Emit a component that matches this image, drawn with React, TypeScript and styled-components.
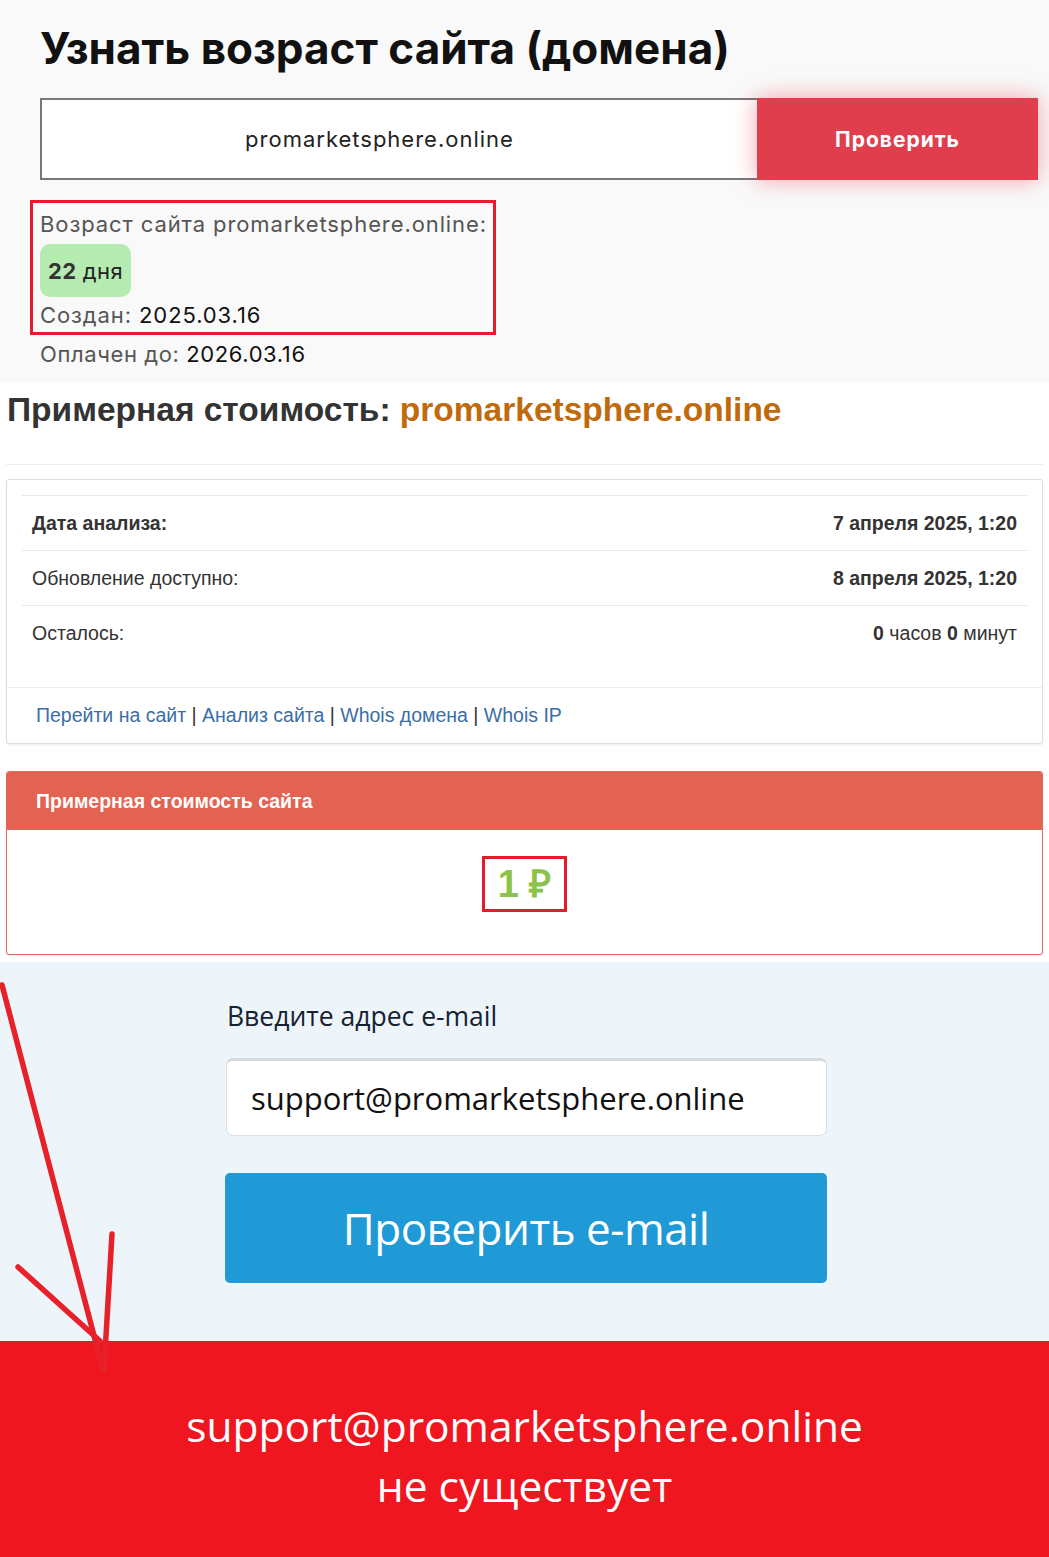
import React from "react";
import styled, { createGlobalStyle } from "styled-components";

const GlobalStyle = createGlobalStyle`
  html, body {
    margin: 0;
    padding: 0;
    background: #ffffff;
  }
  * {
    box-sizing: border-box;
  }
`;

const Page = styled.div`
  position: relative;
  width: 1049px;
  overflow: hidden;
`;

// ---- domain age block ----

const AgeSection = styled.section`
  background: #f9f9f9;
  padding: 22px 11px 12px 40px;
  font-family: "Inter", "Open Sans", sans-serif;
`;

const AgeTitle = styled.h1`
  margin: 0 0 24px;
  font-size: 44px;
  line-height: 52px;
  font-weight: 700;
  color: #111;
`;

const CheckRow = styled.div`
  display: flex;
  height: 82px;
`;

const DomainInput = styled.div`
  flex: 1;
  border: 2px solid #777;
  border-right: none;
  background: #fff;
  display: flex;
  align-items: center;
  justify-content: center;
  padding-right: 40px;
  font-size: 22px;
  letter-spacing: 1px;
  color: #222;
`;

const CheckButton = styled.button`
  width: 281px;
  border: none;
  background: #e03e4d;
  color: #fff;
  font-family: inherit;
  font-size: 21px;
  letter-spacing: 1px;
  font-weight: 700;
  box-shadow: 0 0 22px rgba(230, 60, 75, 0.45);
`;

const ResultBox = styled.div`
  margin: 20px 0 0 -10px;
  width: 466px;
  border: 3px solid #e21c2b;
  padding: 5px 0 1px 7px;
`;

const AgeLine = styled.div`
  font-size: 22px;
  letter-spacing: 0.9px;
  line-height: 32px;
  color: #555;
`;

const Strong = styled.span`
  color: #111;
`;

const DaysBadge = styled.div`
  display: inline-flex;
  align-items: center;
  height: 53px;
  padding: 0 8px;
  margin: 4px 0 2px;
  border-radius: 10px;
  background: #b5ebb1;
  font-size: 22px;
  letter-spacing: 0.5px;
  color: #222;

  b {
    color: #333;
    margin-right: 6px;
  }
`;

const PaidLine = styled(AgeLine)`
  margin-top: 3px;
  letter-spacing: 0.6px;
`;

// ---- estimate block ----

const EstimateSection = styled.section`
  background: #fff;
  padding: 6px 6px 7px;
  font-family: "Liberation Sans", Arial, sans-serif;
`;

const EstimateTitle = styled.h2`
  margin: 0 0 0 1px;
  font-size: 33.5px;
  line-height: 44px;
  font-weight: 700;
  color: #333;

  span {
    color: #c06a0c;
  }
`;

const Divider = styled.hr`
  border: none;
  border-top: 1px solid #eee;
  margin: 32px 0 14px;
`;

const Panel = styled.div<{ accent?: string }>`
  border: 1px solid ${(p) => p.accent || "#ddd"};
  border-radius: 3px;
  background: #fff;
  box-shadow: 0 1px 2px rgba(0, 0, 0, 0.08);
  overflow: hidden;
`;

const PanelGap = styled.div`
  height: 27px;
`;

const PanelBody = styled.div`
  padding: 15px 15px 27px;
`;

const InfoRow = styled.div`
  display: flex;
  justify-content: space-between;
  align-items: center;
  height: 55px;
  padding: 0 10px;
  border-top: 1px solid #e8e8e8;
  font-size: 19.5px;
  color: #333;
`;

const RowLabel = styled.span<{ bold?: boolean }>`
  font-weight: ${(p) => (p.bold ? 700 : 400)};
`;

const PanelFooter = styled.div`
  border-top: 1px solid #eee;
  padding: 16px 29px 16px;
  font-size: 19.5px;
  line-height: 23px;
  color: #333;

  a {
    color: #3b6ea5;
    text-decoration: none;
  }
`;

const PriceHeader = styled.div`
  background: #e36352;
  color: #fff;
  font-weight: 700;
  font-size: 19.5px;
  height: 58px;
  display: flex;
  align-items: center;
  padding-left: 29px;
`;

const PriceBody = styled.div`
  display: flex;
  justify-content: center;
  padding: 26px 0 42px;
`;

const PriceValue = styled.div`
  border: 3px solid #e21c2b;
  padding: 3px 13px;
  font-size: 38px;
  line-height: 44px;
  font-weight: 700;
  color: #8bc34a;
`;

// ---- email check block ----

const EmailSection = styled.section`
  background: #eef5fa;
  padding: 38px 0 58px 225px;
  font-family: "Open Sans", "DejaVu Sans", sans-serif;
`;

const EmailLabel = styled.div`
  font-size: 26.5px;
  line-height: 32px;
  color: #142232;
  margin-left: 2px;
  margin-bottom: 26px;
`;

const EmailInput = styled.div`
  width: 601px;
  height: 78px;
  margin-left: 1px;
  background: #fff;
  border: 1px solid #dcdfe2;
  border-top: 3px solid #d6dadd;
  border-radius: 7px;
  display: flex;
  align-items: center;
  padding-left: 24px;
  font-size: 31px;
  color: #111;
`;

const EmailButton = styled.button`
  display: block;
  width: 602px;
  height: 110px;
  margin-top: 37px;
  border: none;
  border-radius: 5px;
  background: #1f9ad6;
  color: #fff;
  font-family: inherit;
  font-size: 44px;
  letter-spacing: -0.5px;
`;

const ErrorBanner = styled.section`
  background: #ef1620;
  color: #fff;
  font-family: "Open Sans", "DejaVu Sans", sans-serif;
  font-size: 42.5px;
  line-height: 60px;
  text-align: center;
  padding: 55px 0 44px;
`;

const ArrowOverlay = styled.svg`
  position: absolute;
  left: 0;
  top: 975px;
  pointer-events: none;
`;

export default function App() {
  return (
    <Page>
      <GlobalStyle />
      <AgeSection>
        <AgeTitle>Узнать возраст сайта (домена)</AgeTitle>
        <CheckRow>
          <DomainInput>promarketsphere.online</DomainInput>
          <CheckButton>Проверить</CheckButton>
        </CheckRow>
        <ResultBox>
          <AgeLine>Возраст сайта promarketsphere.online:</AgeLine>
          <DaysBadge>
            <b>22</b> дня
          </DaysBadge>
          <AgeLine>
            Создан: <Strong>2025.03.16</Strong>
          </AgeLine>
        </ResultBox>
        <PaidLine>
          Оплачен до: <Strong>2026.03.16</Strong>
        </PaidLine>
      </AgeSection>

      <EstimateSection>
        <EstimateTitle>
          Примерная стоимость: <span>promarketsphere.online</span>
        </EstimateTitle>
        <Divider />
        <Panel>
          <PanelBody>
            <InfoRow>
              <RowLabel bold>Дата анализа:</RowLabel>
              <RowLabel bold>7 апреля 2025, 1:20</RowLabel>
            </InfoRow>
            <InfoRow>
              <RowLabel>Обновление доступно:</RowLabel>
              <RowLabel bold>8 апреля 2025, 1:20</RowLabel>
            </InfoRow>
            <InfoRow>
              <RowLabel>Осталось:</RowLabel>
              <span>
                <b>0</b> часов <b>0</b> минут
              </span>
            </InfoRow>
          </PanelBody>
          <PanelFooter>
            <a href="#">Перейти на сайт</a> | <a href="#">Анализ сайта</a> |{" "}
            <a href="#">Whois домена</a> | <a href="#">Whois IP</a>
          </PanelFooter>
        </Panel>
        <PanelGap />
        <Panel accent="#e06a5c">
          <PriceHeader>Примерная стоимость сайта</PriceHeader>
          <PriceBody>
            <PriceValue>1 ₽</PriceValue>
          </PriceBody>
        </Panel>
      </EstimateSection>

      <EmailSection>
        <EmailLabel>Введите адрес e-mail</EmailLabel>
        <EmailInput>support@promarketsphere.online</EmailInput>
        <EmailButton>Проверить e-mail</EmailButton>
      </EmailSection>

      <ErrorBanner>
        support@promarketsphere.online
        <br />
        не существует
      </ErrorBanner>

      <ArrowOverlay width="130" height="400" viewBox="0 0 130 400">
        <g stroke="#e8202a" strokeWidth="5.5" strokeLinecap="round" fill="none">
          <path d="M2 10 L103 395" />
          <path d="M18 292 L100 366" />
          <path d="M112 259 L104 395" />
        </g>
      </ArrowOverlay>
    </Page>
  );
}
